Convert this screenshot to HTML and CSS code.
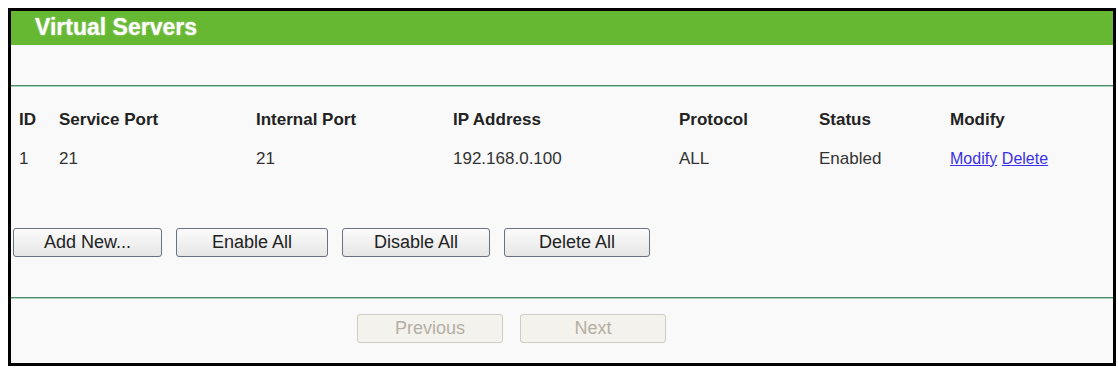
FILE: index.html
```html
<!DOCTYPE html>
<html>
<head>
<meta charset="utf-8">
<link rel="stylesheet" href="styles.css">
</head>
<body>
<div class="panel">
  <div class="title">Virtual Servers</div>
  <div class="spacer"></div>
  <div class="rule"></div>
  <div class="table">
    <div class="row head">
      <div class="c-id">ID</div>
      <div class="c-sp">Service Port</div>
      <div class="c-ip">Internal Port</div>
      <div class="c-addr">IP Address</div>
      <div class="c-proto">Protocol</div>
      <div class="c-status">Status</div>
      <div class="c-mod">Modify</div>
    </div>
    <div class="row data">
      <div class="c-id">1</div>
      <div class="c-sp">21</div>
      <div class="c-ip">21</div>
      <div class="c-addr">192.168.0.100</div>
      <div class="c-proto">ALL</div>
      <div class="c-status">Enabled</div>
      <div class="c-mod"><a href="#" class="lnk">Modify</a> <a href="#" class="lnk">Delete</a></div>
    </div>
  </div>
  <div class="actions">
    <button class="btn w-add">Add New...</button>
    <button class="btn w-en">Enable All</button>
    <button class="btn w-dis">Disable All</button>
    <button class="btn w-del">Delete All</button>
  </div>
  <div class="rule"></div>
  <div class="pager">
    <button class="btn disabled" disabled>Previous</button>
    <button class="btn disabled" disabled>Next</button>
  </div>
</div>
</body>
</html>
```

FILE: styles.css
```css
html, body {
  margin: 0;
  padding: 0;
  background: #ffffff;
}
body {
  padding: 8px 0 0 8px;
  font-family: "Liberation Sans", Arial, sans-serif;
}
.panel {
  width: 1102px;
  height: 352px;
  border: 3px solid #000;
  background: #f9f9f9;
  display: flex;
  flex-direction: column;
}
.title {
  height: 34px;
  background: #66b832;
  color: #fff;
  font-weight: bold;
  font-size: 23px;
  line-height: 32px;
  padding-left: 24px;
  text-shadow: 0 0 2px rgba(255,255,255,0.6);
  box-sizing: border-box;
}
.spacer {
  height: 40px;
}
.rule {
  height: 1px;
  border-top: 1px solid #4f8a69;
  border-bottom: 1px solid #a6d4bd;
  background: #6f9f84;
  height: 0;
}
.table {
  padding: 13px 0 0 8px;
}
.row {
  display: grid;
  grid-template-columns: 40px 197px 197px 226px 140px 131px 1fr;
  height: 39px;
  align-items: center;
  font-size: 17px;
  color: #222;
}
.row.head {
  font-weight: bold;
}
.row.data {
  color: #333;
}
.lnk {
  color: #3a30e6;
  font-size: 16px;
  text-decoration: underline;
}
.actions {
  display: flex;
  gap: 14px;
  padding: 50px 0 0 2px;
  height: 29px;
  margin-bottom: 40px;
}
.btn {
  height: 29px;
  font-family: "Liberation Sans", Arial, sans-serif;
  font-size: 18px;
  color: #222;
  background: linear-gradient(#fbfbfb, #e6e6e6);
  border: 1px solid #6a7282;
  border-radius: 3px;
  padding: 0;
  box-sizing: border-box;
}
.w-add { width: 149px; }
.w-en { width: 152px; }
.w-dis { width: 148px; }
.w-del { width: 146px; }
.pager {
  display: flex;
  gap: 17px;
  padding: 15px 0 0 346px;
}
.btn.disabled {
  width: 146px;
  color: #b3afa5;
  background: #f4f2ec;
  border: 1px solid #cfccc1;
}
```
